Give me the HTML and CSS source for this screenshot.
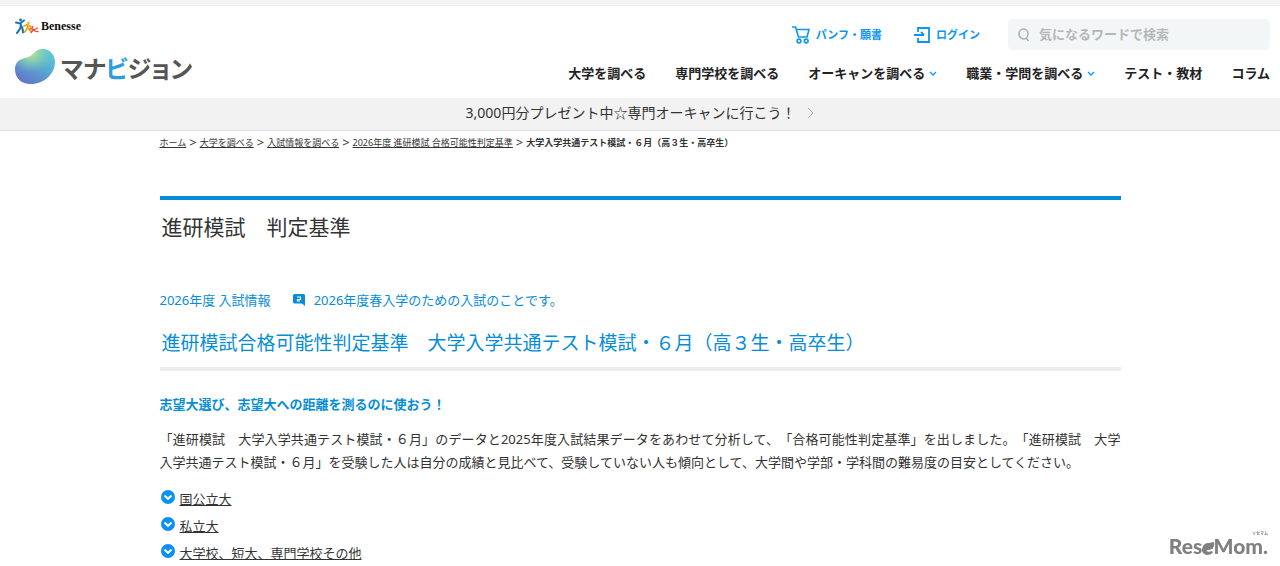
FILE: index.html
```html
<!DOCTYPE html>
<html lang="ja">
<head>
<meta charset="utf-8">
<meta name="viewport" content="width=device-width, initial-scale=1">
<title>進研模試 判定基準 | マナビジョン</title>
<link rel="stylesheet" href="styles.css">
</head>
<body>
<header class="header">
  <div class="brand">
    <a class="benesse" href="#">
      <svg width="24" height="17" viewBox="0 0 24 17" fill="none" stroke-linecap="round" aria-hidden="true">
        <g stroke="#1673b8" stroke-width="2"><path d="M1 4.500L5 5.500L9 2.500M5.500 5.500Q7 9 2 15M6 8Q8 10 8 14.500"/></g>
        <circle cx="5.500" cy="2" r="1.400" fill="#1673b8"/>
        <g stroke="#f0a91c" stroke-width="1.800"><path d="M9 8L12.500 6.500L16 9M12.500 7Q13 11 9.500 14M13 10L16 13.500"/></g>
        <circle cx="13.500" cy="4.800" r="1.200" fill="#f0a91c"/>
        <g stroke="#e4523c" stroke-width="1.400"><path d="M15 11Q18 10 19 12L22.500 10M18 12L16 14.500M19 12Q20 14 23 13.500"/></g>
        <circle cx="17.500" cy="9" r="1" fill="#e4523c"/>
      </svg>
      <span>Benesse</span>
    </a>
    <a class="manavision" href="#">
      <svg width="40" height="36" viewBox="0 0 40 36" aria-hidden="true">
        <defs>
          <linearGradient id="bean" x1="0.300" y1="1" x2="0.900" y2="0.100"><stop offset="0" stop-color="#6277c8"/><stop offset="0.550" stop-color="#58a9d2"/><stop offset="1" stop-color="#5ac9d8"/></linearGradient>
          <radialGradient id="glow" cx="0.400" cy="0.120" r="0.550"><stop offset="0" stop-color="#c5e583"/><stop offset="0.350" stop-color="#a1dc9e" stop-opacity="0.750"/><stop offset="1" stop-color="#7ecdb5" stop-opacity="0"/></radialGradient>
        </defs>
        <path d="M0 20C0 13 5 10 11 9C18 8 20 0 28 0C35 0 40 6 40 13C40 25 29 35 16 35C6 35 0 29 0 20Z" fill="url(#bean)"/>
        <path d="M0 20C0 13 5 10 11 9C18 8 20 0 28 0C35 0 40 6 40 13C40 25 29 35 16 35C6 35 0 29 0 20Z" fill="url(#glow)"/>
      </svg>
      <span class="wordmark">マナ<span class="accent">ビ</span>ジョン</span>
    </a>
  </div>
  <div class="menus">
    <div class="tools">
      <a class="tool" href="#">
        <svg width="18" height="18" viewBox="0 0 18 18" fill="none" stroke="#0b96f5" stroke-width="1.600" aria-hidden="true"><path d="M0 1H3.500L6.500 11H15L17 3.500H4.500"/><circle cx="7" cy="15" r="1.900"/><circle cx="14.200" cy="15" r="1.900"/></svg>
        パンフ・願書
      </a>
      <a class="tool login" href="#">
        <svg width="16" height="18" viewBox="0 0 16 18" fill="none" stroke="#0b96f5" stroke-width="1.800" aria-hidden="true"><path d="M4 6V2H15V16H4V12M0 9H10M7 6L10 9"/></svg>
        ログイン
      </a>
      <label class="search">
        <svg width="12" height="14" viewBox="0 0 12 14" fill="none" stroke="#a5adae" stroke-width="1.500" aria-hidden="true"><ellipse cx="5.500" cy="6" rx="4.500" ry="5"/><path d="M8 10L10.500 13"/></svg>
        <input type="search" placeholder="気になるワードで検索" aria-label="サイト内検索">
      </label>
    </div>
    <nav class="nav">
      <a href="#">大学を調べる</a>
      <a href="#">専門学校を調べる</a>
      <a href="#">オーキャンを調べる<svg width="8" height="5" viewBox="0 0 8 5" aria-hidden="true"><path d="M1 1L4 4L7 1"/></svg></a>
      <a href="#">職業・学問を調べる<svg width="8" height="5" viewBox="0 0 8 5" aria-hidden="true"><path d="M1 1L4 4L7 1"/></svg></a>
      <a href="#">テスト・教材</a>
      <a href="#">コラム</a>
    </nav>
  </div>
</header>
<a class="banner" href="#">3,000円分プレゼント中☆専門オーキャンに行こう！<svg width="7" height="12" viewBox="0 0 7 12" fill="none" stroke="#aaa" aria-hidden="true"><path d="M1 1L6 6L1 11"/></svg></a>
<main class="page">
  <nav class="crumbs" aria-label="パンくず">
    <a href="#">ホーム</a><span>&gt;</span><a href="#">大学を調べる</a><span>&gt;</span><a href="#">入試情報を調べる</a><span>&gt;</span><a href="#">2026年度 進研模試 合格可能性判定基準</a><span>&gt;</span><strong>大学入学共通テスト模試・６月（高３生・高卒生）</strong>
  </nav>
  <h1 class="title">進研模試　判定基準</h1>
  <p class="info">
    <span>2026年度 入試情報</span>
    <svg width="12" height="12" viewBox="0 0 12 12" aria-hidden="true"><path d="M1.500 0H10.500Q12 0 12 1.500V12L9 9.500H1.500Q0 9.500 0 8V1.500Q0 0 1.500 0Z" fill="#058dd8"/><path d="M4 3H7.500V5.500H4.500V7H7" fill="none" stroke="#fff" stroke-width="1.200"/></svg>
    <span>2026年度春入学のための入試のことです。</span>
  </p>
  <h2 class="subtitle">進研模試合格可能性判定基準　大学入学共通テスト模試・６月（高３生・高卒生）</h2>
  <h3 class="lead">志望大選び、志望大への距離を測るのに使おう！</h3>
  <p class="text">「進研模試　大学入学共通テスト模試・６月」のデータと2025年度入試結果データをあわせて分析して、「合格可能性判定基準」を出しました。「進研模試　大学入学共通テスト模試・６月」を受験した人は自分の成績と見比べて、受験していない人も傾向として、大学間や学部・学科間の難易度の目安としてください。</p>
  <ul class="links">
    <li><svg width="14" height="14" viewBox="0 0 14 14" aria-hidden="true"><circle cx="7" cy="7" r="7"/><path d="M3.500 5.500L7 8.800L10.500 5.500"/></svg><a href="#">国公立大</a></li>
    <li><svg width="14" height="14" viewBox="0 0 14 14" aria-hidden="true"><circle cx="7" cy="7" r="7"/><path d="M3.500 5.500L7 8.800L10.500 5.500"/></svg><a href="#">私立大</a></li>
    <li><svg width="14" height="14" viewBox="0 0 14 14" aria-hidden="true"><circle cx="7" cy="7" r="7"/><path d="M3.500 5.500L7 8.800L10.500 5.500"/></svg><a href="#">大学校、短大、専門学校その他</a></li>
  </ul>
</main>
<div class="watermark">
  <span class="ruby">リセマム</span>
  <span class="name">Res<span class="leafy">e<svg width="13" height="13" viewBox="0 0 13 13" aria-hidden="true"><path d="M0 8C0 3 5 1 12 0C13 4 11 8 6 8L4 9Q6 11 11 10Q9 13 5 13Q0 12 0 8Z"/></svg></span>Mom.</span>
</div>
</body>
</html>
```
FILE: styles.css
```css
* {
  box-sizing: border-box;
}

body {
  margin: 0;
  border-top: 5px solid #f5f5f5;
  background: #fff;
  color: #333;
  font-family: "Noto Sans", "Noto Sans CJK JP", sans-serif;
  font-size: 13px;
  line-height: 23px;
  text-spacing-trim: space-all;
}

a {
  color: inherit;
}

h1, h2, h3, p, ul {
  margin: 0;
  padding: 0;
  font-weight: 400;
}

.header {
  display: flex;
  justify-content: space-between;
  padding: 12px 10px 13px 15px;
  border-top: 1px solid #eee;
}

.header a {
  text-decoration: none;
}

.brand {
  display: flex;
  flex-direction: column;
  gap: 14px;
}

.benesse {
  display: flex;
  align-items: center;
  gap: 2px;
  height: 17px;
  color: #111;
  font: bold 12px/17px "Liberation Serif", serif;
}

.manavision {
  display: flex;
  align-items: center;
  gap: 6px;
  height: 36px;
}

.wordmark {
  padding-top: 2px;
  color: #555;
  font: bold 24px/36px "Noto Sans CJK JP", sans-serif;
  font-feature-settings: "palt";
}

.accent {
  color: #2e9edb;
}

.menus {
  display: flex;
  flex-direction: column;
  align-items: flex-end;
  gap: 12px;
  padding-top: 1px;
}

.tools {
  display: flex;
  align-items: center;
}

.tool {
  display: flex;
  align-items: center;
  gap: 6px;
  margin-right: 32px;
  color: #0b96f5;
  font-size: 11px;
  font-weight: 700;
}

.login {
  margin-right: 28px;
}

.search {
  display: flex;
  align-items: center;
  gap: 9px;
  width: 262px;
  height: 31px;
  padding: 0 10px;
  border-radius: 5px;
  background: #f3f6f6;
}

.search input {
  flex: 1;
  min-width: 0;
  padding: 0;
  border: 0;
  outline: 0;
  background: none;
  color: #333;
  font: inherit;
  font-weight: 700;
}

.search input::placeholder {
  color: #b4b8b9;
  opacity: 1;
}

.nav {
  display: flex;
  gap: 29px;
  color: #222;
  font-weight: 700;
}

.nav a {
  display: flex;
  align-items: center;
  gap: 4px;
}

.nav path {
  fill: none;
  stroke: #0b96f5;
  stroke-width: 1.300;
}

.banner {
  display: flex;
  align-items: center;
  justify-content: center;
  gap: 12px;
  height: 33px;
  padding-bottom: 3px;
  border-bottom: 1px solid #dfe2e7;
  background: #f2f2f2;
  font-size: 14px;
  text-decoration: none;
}

.page {
  max-width: 961px;
  margin: 0 auto;
}

.crumbs {
  display: flex;
  gap: 3px;
  padding-bottom: 42px;
  font-size: 9px;
}

.crumbs span {
  font-size: 13px;
}

.title {
  padding: 12px 2px 14px;
  border-top: 4px solid #058dd8;
  font-size: 21px;
  line-height: 30px;
}

.info {
  display: flex;
  align-items: center;
  padding: 33px 0 15px;
  color: #058dd8;
}

.info svg {
  margin: 0 9px 2px 22px;
}

.subtitle {
  padding: 2px 2px 10px;
  border-bottom: 4px solid #ededed;
  color: #058dd8;
  font-size: 19px;
  line-height: 28px;
}

.lead {
  padding: 22px 0 12px;
  color: #058dd8;
  font-size: 13px;
  font-weight: 700;
}

.text {
  text-align: justify;
}

.links {
  padding-top: 12px;
  list-style: none;
}

.links li {
  display: flex;
  align-items: center;
  gap: 5px;
  height: 27px;
  padding-left: 1px;
}

.links svg {
  margin-bottom: 6px;
}

.links circle {
  fill: #0b91f5;
}

.links path {
  fill: none;
  stroke: #fff;
  stroke-width: 2;
}

.watermark {
  position: fixed;
  right: 12px;
  bottom: 10px;
  display: flex;
  flex-direction: column;
  align-items: flex-end;
  color: #808080;
}

.ruby {
  font: 700 4px/6px "Noto Sans CJK JP", sans-serif;
}

.name {
  font: 900 21px/20px Lato, sans-serif;
}

.leafy {
  position: relative;
}

.leafy svg {
  position: absolute;
  left: 0;
  bottom: 3px;
  fill: #808080;
}
```
